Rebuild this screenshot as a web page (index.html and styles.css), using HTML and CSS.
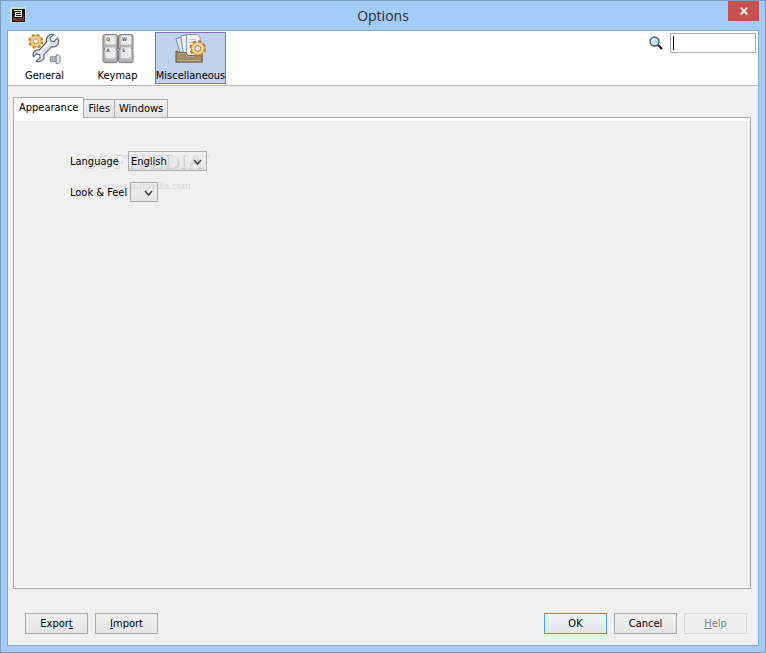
FILE: index.html
```html
<!DOCTYPE html>
<html lang="en">
<head>
    <meta charset="UTF-8">
    <meta name="viewport" content="width=device-width, initial-scale=1.0">
    <title>Options</title>
    <link rel="stylesheet" href="styles.css">
</head>
<body>
    <div class="window">
        <header class="titlebar">
            <svg class="app-icon" width="16" height="16" viewBox="0 0 16 16">
                <defs>
                    <linearGradient id="brown" x1="0" y1="0" x2="0" y2="1">
                        <stop offset="0" stop-color="#120805"/>
                        <stop offset="1" stop-color="#7a4030"/>
                    </linearGradient>
                </defs>
                <rect width="16" height="16" fill="#c5e0d4"/>
                <rect x="2" y="2" width="13" height="13" fill="#120805"/>
                <rect x="3" y="3" width="11" height="11" fill="url(#brown)"/>
                <rect x="4" y="3" width="9" height="8" fill="#0a0504"/>
                <path d="M4 3.500h7M6 5.500h5M6 7.500h5M4.500 9.500h7.500M5.500 5v5M11.500 3v7" stroke="#f3f0dc" fill="none"/>
            </svg>
            <h1>Options</h1>
            <button type="button" class="close" aria-label="Close">
                <svg width="8" height="8" viewBox="0 0 8 8"><path d="M.7.7l6.6 6.6M7.3.7L.7 7.3" stroke="#fff" stroke-width="1.8"/></svg>
            </button>
        </header>

        <main class="client">
            <!-- Category toolbar -->
            <div class="toolbar">
                <nav class="categories">
                    <button type="button" class="category">
                        <svg width="34" height="34" viewBox="0 0 34 34">
                            <circle cx="7.500" cy="8.500" r="6.500" fill="#f3ca7e" stroke="#b9873f" stroke-width="2.500" stroke-dasharray="3.1 2"/>
                            <circle cx="7.500" cy="8.500" r="5.500" fill="#f6d391" stroke="#d9a657"/>
                            <circle cx="7.500" cy="8.500" r="2.500" fill="#fff" stroke="#b9873f"/>
                            <path d="M30 5l-4 4-3-1-1-3 4-3.500c-5-1-8.500 3-7.200 7.500L11 17.500C7 16.500 3.500 20 5 24.500l3.500-3 3 1 .5 3-4 3.500c5 1.800 9-2 7.800-6.500l8-8.500C28.500 15.500 33 11 30 5z" fill="#dfe3ea" stroke="#626a78" stroke-width="1.200" stroke-linejoin="round"/>
                            <path d="M11 20.500l11-11" stroke="#fff" stroke-width="1.500"/>
                            <path d="M22.500 24.500h6v5h-6z" fill="#d5d9df" stroke="#777d87"/>
                            <path d="M24.500 25v4M26.500 25v4" stroke="#858b95"/>
                            <path d="M28.500 22.500h2.500l1.500 2v5l-1.500 2h-2.500z" fill="#e4e7eb" stroke="#777d87"/>
                        </svg>
                        <span>General</span>
                    </button>
                    <button type="button" class="category">
                        <svg width="34" height="34" viewBox="0 0 34 34">
                            <path d="M3.500 1.500h11q2 0 2 2v13h-15v-13q0-2 2-2zM19.500 1.500h11q2 0 2 2v13h-15v-13q0-2 2-2zM3.500 16.500h11q2 0 2 2v10q0 2-2 2h-11q-2 0-2-2v-10q0-2 2-2zM19.500 16.500h11q2 0 2 2v10q0 2-2 2h-11q-2 0-2-2v-10q0-2 2-2z" fill="#b2b2b4" stroke="#7b7b7d"/>
                            <g fill="#ececee" stroke="#d6d6d8">
                                <rect x="4" y="2.500" width="10.500" height="9.500" rx="1.500"/>
                                <rect x="20" y="2.500" width="10.500" height="9.500" rx="1.500"/>
                                <rect x="4" y="15" width="10.500" height="11" rx="1.500"/>
                                <rect x="20" y="15" width="10.500" height="11" rx="1.500"/>
                            </g>
                            <g class="key-letters"><text x="5" y="8">Q</text><text x="21" y="8">W</text><text x="5" y="20">A</text><text x="21" y="20">S</text></g>
                        </svg>
                        <span>Keymap</span>
                    </button>
                    <button type="button" class="category selected">
                        <svg width="34" height="34" viewBox="0 0 34 34">
                            <path d="M1.500 6l8-2.500 6 21-8 2.500z" fill="#d8e3ef" stroke="#788ba1"/>
                            <path d="M6.500 3l9-1.500 3 22-9 1z" fill="#edf2f8" stroke="#788ba1"/>
                            <path d="M12.500 1.500h11l3 3v20h-14z" fill="#f8fafc" stroke="#8493a5"/>
                            <path d="M15 6.500h7M15 9.500h5M15 12.500h3" stroke="#b4bdc7"/>
                            <path d="M1.500 18.500l3 1.500h7l2 3h13l2-2v9h-27z" fill="#a18d65" stroke="#5d4e36" stroke-linejoin="round"/>
                            <path d="M3 28.500h24M3.500 21h7.500l2 3h7" fill="none" stroke="#c4b18a"/>
                            <circle cx="24" cy="16" r="7" fill="#f3ca7e" stroke="#b67a35" stroke-width="3" stroke-dasharray="3.500 2"/>
                            <circle cx="24" cy="16" r="6.500" fill="#f9d797" stroke="#d69a4b"/>
                            <circle cx="24" cy="16" r="3" fill="#f4f2ee" stroke="#a86a29"/>
                        </svg>
                        <span>Miscellaneous</span>
                    </button>
                </nav>
                <div class="search">
                    <label for="search" aria-label="Search">
                        <svg width="14" height="14" viewBox="0 0 14 14">
                            <path d="M8.500 8.500l4.500 4.500" stroke="#222" stroke-width="2.300"/>
                            <circle cx="5.500" cy="5.500" r="4.500" fill="#c4def0" stroke="#50565e" stroke-width="1.300"/>
                            <path d="M3 5q.5-2 2.500-2.300" fill="none" stroke="#fff" stroke-width="1.300"/>
                        </svg>
                    </label>
                    <div class="search-box">
                        <input type="text" id="search">
                        <span class="caret"></span>
                    </div>
                </div>
            </div>

            <div class="tabs" role="tablist">
                <button type="button" class="tab active" role="tab" aria-selected="true">Appearance</button>
                <button type="button" class="tab" role="tab">Files</button>
                <button type="button" class="tab" role="tab">Windows</button>
            </div>

            <section class="panel">
                <div class="watermark">
                    <div class="mark-name">SOFTPEDIA<sup>™</sup></div>
                    <div class="mark-url">www.softpedia.com</div>
                </div>
                <div class="field">
                    <label for="language" class="language-label">Language</label>
                    <div class="combo language">
                        <select id="language"><option>English</option></select>
                        <svg class="arrow" width="9" height="7" viewBox="0 0 9 7"><path d="M1 1l3.500 4L8 1" fill="none" stroke="#444" stroke-width="1.600"/></svg>
                    </div>
                </div>
                <div class="field">
                    <label for="look" class="look-label">Look &amp; Feel</label>
                    <div class="combo look">
                        <select id="look"></select>
                        <svg class="arrow" width="9" height="7" viewBox="0 0 9 7"><path d="M1 1l3.500 4L8 1" fill="none" stroke="#444" stroke-width="1.600"/></svg>
                    </div>
                </div>
            </section>

            <footer class="actions">
                <button type="button">Expor<u>t</u></button>
                <button type="button"><u>I</u>mport</button>
                <span class="spacer"></span>
                <button type="button" class="default">OK</button>
                <button type="button">Cancel</button>
                <button type="button" disabled><u>H</u>elp</button>
            </footer>
        </main>
    </div>
</body>
</html>
```

FILE: styles.css
```css
* {
    box-sizing: border-box;
}

body {
    margin: 0;
    font-family: "DejaVu Sans Condensed", "DejaVu Sans", sans-serif;
    font-size: 11px;
    color: #000;
}

button, input, select {
    font: inherit;
    color: inherit;
    margin: 0;
}

.window {
    display: flex;
    flex-direction: column;
    min-height: 100vh;
    padding: 0 6px 6px;
    background-color: #a4ccf8;
    border: 1px solid #7c9cc0;
}

/* Title bar */
.titlebar {
    display: grid;
    grid-template-columns: 31px 1fr 31px;
    align-items: start;
    height: 29px;
}

.app-icon {
    margin: 6px 0 0 3px;
}

.titlebar h1 {
    margin: 0;
    font-family: "Open Sans", sans-serif;
    font-size: 14px;
    font-weight: normal;
    line-height: 29px;
    text-align: center;
    color: #2b2b2b;
}

.close {
    display: flex;
    align-items: center;
    justify-content: center;
    height: 20px;
    padding: 0;
    border: 0;
    background-color: #c75050;
}

.client {
    display: flex;
    flex: 1;
    flex-direction: column;
    background-color: #f0f0f0;
    border: 1px solid #87a7cf;
}

/* Toolbar */
.toolbar {
    display: flex;
    justify-content: space-between;
    height: 55px;
    padding: 1px 2px 1px 0;
    background-color: #fff;
    border-bottom: 1px solid #b8b8b8;
}

.categories {
    display: flex;
    gap: 2px;
    padding-left: 1px;
}

.category {
    display: flex;
    flex-direction: column;
    align-items: center;
    gap: 3px;
    width: 71px;
    height: 52px;
    padding: 0;
    border: 1px solid transparent;
    background-color: transparent;
    line-height: 14px;
    white-space: nowrap;
}

.category.selected {
    background-color: #c1d2ee;
    border-color: #8d6cc4;
}

.key-letters {
    font-size: 5px;
    font-weight: bold;
    fill: #555;
}

.search {
    display: flex;
    align-items: flex-start;
    gap: 7px;
    padding-top: 1px;
}

.search label {
    padding-top: 3px;
}

.search-box {
    position: relative;
}

.search-box input {
    display: block;
    width: 86px;
    height: 20px;
    padding: 0 4px;
    border: 1px solid #abadb3;
    background-color: #fff;
    outline: none;
}

.caret {
    position: absolute;
    left: 3px;
    top: 3px;
    width: 1px;
    height: 14px;
    background-color: #000;
}

/* Tabs */
.tabs {
    display: flex;
    align-items: flex-end;
    margin: 11px 5px 0;
}

.tab {
    height: 18px;
    padding: 0 4px;
    border: 1px solid #acacac;
    border-bottom: 0;
    border-left: 0;
    background-image: linear-gradient(#f0f0f0, #e5e5e5);
}

.tab.active {
    height: 21px;
    padding: 0 5px 1px;
    margin-bottom: -1px;
    border-left: 1px solid #acacac;
    background: #fff;
    z-index: 1;
}

.panel {
    position: relative;
    display: flex;
    flex: 1;
    flex-direction: column;
    gap: 11px;
    margin: 0 7px 0 5px;
    padding: 33px 56px;
    border: 1px solid #acacac;
    box-shadow: inset 0 3px #fff, inset 1px -1px #fff;
}

.field {
    position: relative;
    display: flex;
    align-items: center;
    height: 20px;
}

.language-label {
    width: 58px;
}

.look-label {
    width: 60px;
}

.combo {
    position: relative;
}

.combo select {
    display: block;
    width: 100%;
    height: 20px;
    padding: 0 2px;
    appearance: none;
    border: 1px solid #acacac;
    border-radius: 0;
    background-color: transparent;
    background-image: linear-gradient(rgba(0, 0, 0, 0), rgba(0, 0, 0, 0.05));
}

.language {
    width: 79px;
}

.look {
    width: 28px;
}

.arrow {
    position: absolute;
    right: 5px;
    top: 8px;
    pointer-events: none;
}

/* Embossed stamp behind the fields */
.watermark {
    position: absolute;
    left: 66px;
    top: 31px;
    width: 132px;
    text-align: center;
    white-space: nowrap;
    color: #ececec;
    text-shadow: 1px 1px #d2d2d2, -1px -1px #f8f8f8;
    pointer-events: none;
    font-family: "Liberation Serif", serif;
}

.mark-name {
    font-size: 22px;
    line-height: 24px;
}

.mark-name sup {
    font-size: 6px;
    line-height: 0;
    vertical-align: 10px;
}

.mark-url {
    font-size: 11px;
    line-height: 22px;
}

/* Bottom buttons */
.actions {
    display: flex;
    gap: 7px;
    padding: 24px 11px 11px 17px;
}

.actions button {
    width: 63px;
    height: 21px;
    padding: 0;
    border: 1px solid #acacac;
    background-image: linear-gradient(#f0f0f0, #e5e5e5);
}

.actions .default {
    border-color: #4a9ff0;
    background-image: linear-gradient(#eef1f5, #e3e6e9);
}

.actions button:disabled {
    border-color: #d9d9d9;
    background: #efefef;
    color: #838383;
}

.spacer {
    flex: 1;
}
```
